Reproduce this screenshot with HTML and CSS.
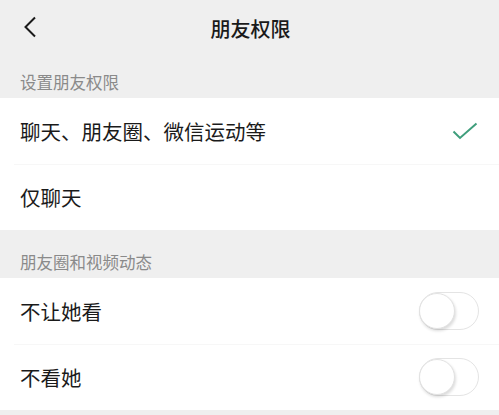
FILE: index.html
```html
<!DOCTYPE html>
<html lang="zh-CN">
<head>
    <meta charset="UTF-8">
    <meta name="viewport" content="width=device-width, initial-scale=1.0">
    <title>朋友权限</title>
    <link rel="stylesheet" href="styles.css">
</head>
<body>
    <header class="top-bar">
        <span class="back">
            <svg width="14" height="22" viewBox="0 0 14 22"><path d="M12 1.5 L2.5 11 L12 20.5" fill="none" stroke="#1a1a1a" stroke-width="2"/></svg>
        </span>
        <h1>朋友权限</h1>
    </header>

    <div class="section-label">设置朋友权限</div>
    <div class="group">
        <div class="row">
            <span>聊天、朋友圈、微信运动等</span>
            <svg class="check" width="26" height="20" viewBox="0 0 26 20"><path d="M1.5 9.5 L8 16 L24.5 1.5" fill="none" stroke="#3f9e7c" stroke-width="2"/></svg>
        </div>
        <div class="row">
            <span>仅聊天</span>
        </div>
    </div>

    <div class="section-label">朋友圈和视频动态</div>
    <div class="group">
        <div class="row">
            <span>不让她看</span>
            <span class="switch"><span class="knob"></span></span>
        </div>
        <div class="row">
            <span>不看她</span>
            <span class="switch"><span class="knob"></span></span>
        </div>
    </div>
</body>
</html>
```

FILE: styles.css
```css
* {
    margin: 0;
    padding: 0;
    box-sizing: border-box;
}

body {
    background: #efefef;
    font-family: "Noto Sans CJK SC", "Noto Sans", sans-serif;
    color: #1a1a1a;
}

.top-bar {
    height: 56px;
    display: flex;
    align-items: center;
    justify-content: center;
    position: relative;
}

.top-bar h1 {
    font-size: 20px;
    font-weight: 500;
    margin-left: 2px;
}

.back {
    position: absolute;
    left: 23px;
    top: 16px;
    display: flex;
}

.section-label {
    height: 42px;
    padding: 14px 20px 0;
    font-size: 16.5px;
    color: #8a8a8a;
    line-height: 24px;
}

.group {
    background: #fff;
}

.group + .section-label {
    height: 48px;
    padding-top: 20px;
}

.row {
    height: 66px;
    display: flex;
    align-items: center;
    justify-content: space-between;
    padding: 0 20px;
    font-size: 20.5px;
    position: relative;
}

.row + .row::before {
    content: "";
    position: absolute;
    left: 14px;
    right: 0;
    top: 0;
    border-top: 1px solid #f7f7f7;
}

.check {
    margin-right: 1px;
    margin-top: 2px;
}

.switch {
    width: 60px;
    height: 38px;
    border: 1.5px solid #e4e4e4;
    border-radius: 19px;
    background: #fff;
    display: flex;
    align-items: center;
}

.knob {
    width: 36px;
    height: 36px;
    border-radius: 50%;
    background: #fff;
    border: 1px solid #e2e2e2;
    box-shadow: 1px 2px 3px rgba(0, 0, 0, 0.14);
    margin-left: -1px;
}
```
